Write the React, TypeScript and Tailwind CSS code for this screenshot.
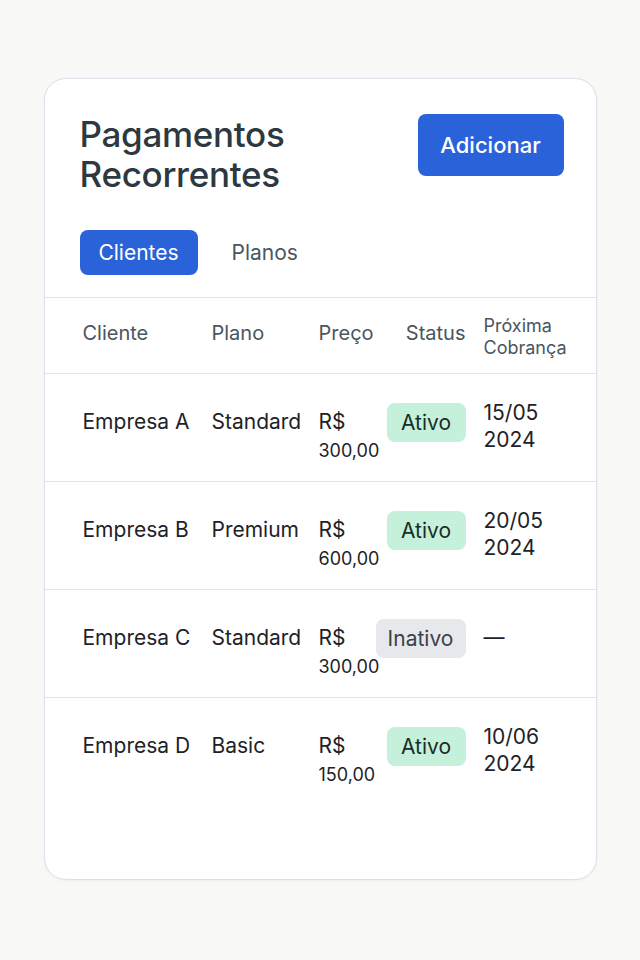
import React from 'react';

type Row = {
  cliente: string;
  plano: string;
  preco: string;
  ativo: boolean;
  data?: [string, string];
};

const rows: Row[] = [
  { cliente: 'Empresa A', plano: 'Standard', preco: '300,00', ativo: true, data: ['15/05', '2024'] },
  { cliente: 'Empresa B', plano: 'Premium', preco: '600,00', ativo: true, data: ['20/05', '2024'] },
  { cliente: 'Empresa C', plano: 'Standard', preco: '300,00', ativo: false },
  { cliente: 'Empresa D', plano: 'Basic', preco: '150,00', ativo: true, data: ['10/06', '2024'] },
];

const cols = 'grid grid-cols-[129px_107px_57px_90px_1fr]';

const StatusBadge = ({ ativo }: { ativo: boolean }) =>
  ativo ? (
    <span className="inline-flex h-[39px] w-[79px] items-center justify-center rounded-lg bg-[#c4f0dc] text-[21px] text-[#1b2c25]">
      Ativo
    </span>
  ) : (
    <span className="inline-flex h-[39px] w-[90px] items-center justify-center rounded-lg bg-[#e6e8ec] text-[21px] text-[#3a4149]">
      Inativo
    </span>
  );

export default function App() {
  return (
    <div className="min-h-[960px] bg-[#f8f8f6] pt-[78px] font-['Inter',sans-serif]">
      <div className="mx-auto h-[802px] w-[553px] overflow-hidden rounded-[22px] border border-[#dbe1e8] bg-white shadow-[0_1px_3px_rgba(0,0,0,0.04)]">
        <div className="flex items-start justify-between pl-[35px] pr-[32px] pt-[35px]">
          <h1 className="text-[35px] font-medium leading-[40px] tracking-[-0.3px] text-[#2d3840]">
            Pagamentos
            <br />
            Recorrentes
          </h1>
          <button className="h-[62px] w-[146px] rounded-lg bg-[#2a62d9] text-[22px] font-medium text-white">
            Adicionar
          </button>
        </div>

        <div className="flex items-center gap-[34px] px-[35px] pt-[36px] pb-[22px]">
          <button className="h-[45px] w-[118px] rounded-lg bg-[#2a62d9] text-[21px] text-white">
            Clientes
          </button>
          <span className="text-[21px] text-[#4b5560]">Planos</span>
        </div>

        <div className={`${cols} h-[77px] items-center border-y border-[#dde3ea] pl-[38px] text-[20px] text-[#4a5560]`}>
          <span className="pb-[5px]">Cliente</span>
          <span className="pb-[5px]">Plano</span>
          <span className="pb-[5px]">Preço</span>
          <span className="pb-[5px] text-right">Status</span>
          <span className="pl-[18px] pt-[3px] text-[18px] leading-[22px]">
            Próxima
            <br />
            Cobrança
          </span>
        </div>

        {rows.map((r, i) => (
          <div
            key={r.cliente}
            className={`${cols} h-[108px] items-start pl-[38px] text-[21px] text-[#1e2227] ${
              i < rows.length - 1 ? 'border-b border-[#dde3ea]' : ''
            }`}
          >
            <span className="pt-[34px] leading-[28px]">{r.cliente}</span>
            <span className="pt-[34px] leading-[28px]">{r.plano}</span>
            <div className="pt-[34px]">
              <div className="leading-[28px]">R$</div>
              <div className="text-[18px] leading-[30px]">{r.preco}</div>
            </div>
            <div className="flex justify-end pt-[29px]">
              <StatusBadge ativo={r.ativo} />
            </div>
            <div className="pl-[18px] pt-[25px] leading-[27px]">
              {r.data ? (
                <>
                  <div>{r.data[0]}</div>
                  <div>{r.data[1]}</div>
                </>
              ) : (
                <div className="pt-[9px]">—</div>
              )}
            </div>
          </div>
        ))}
      </div>
    </div>
  );
}
